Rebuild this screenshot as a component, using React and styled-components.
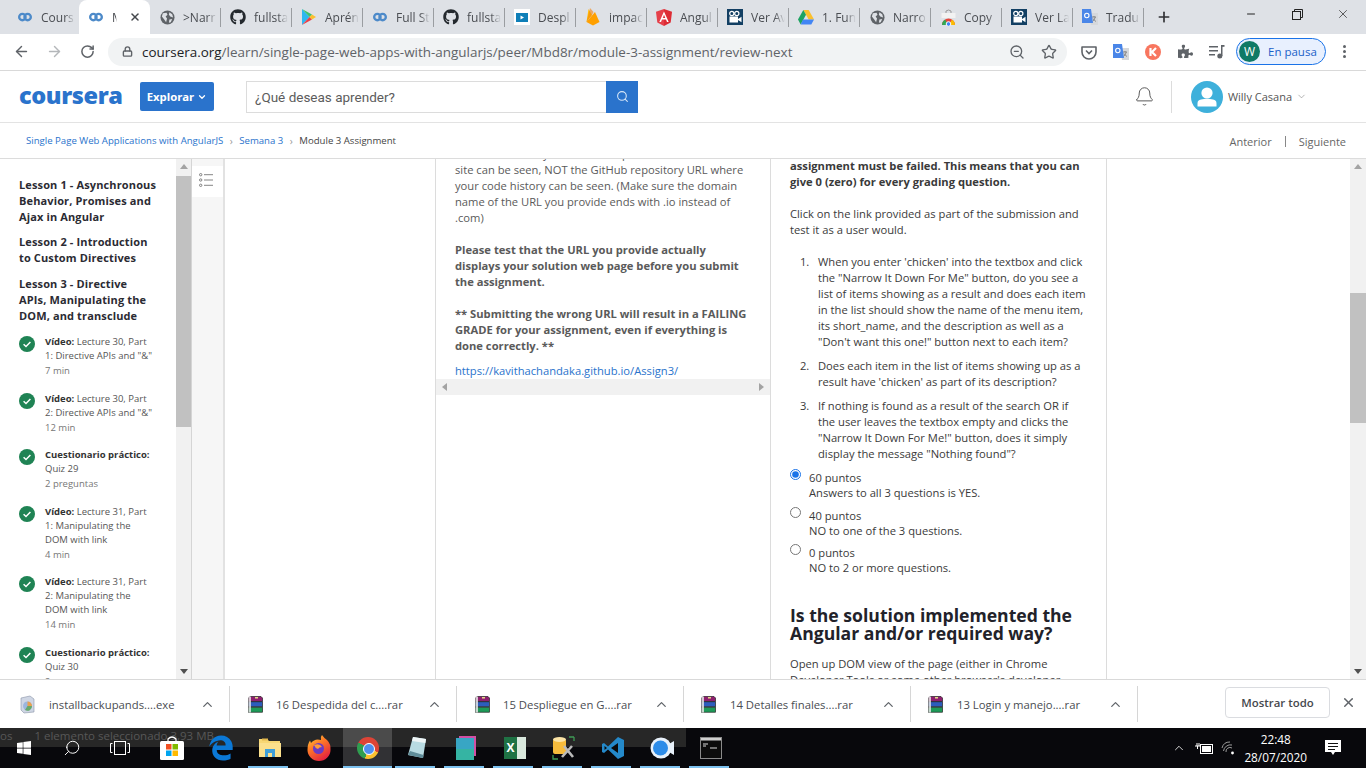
import React from "react";
import styled, { createGlobalStyle } from "styled-components";
import { FaGithub, FaPuzzlePiece, FaEdgeLegacy, FaWindows } from "react-icons/fa";
import {
  ArrowLeft,
  ArrowRight,
  RotateCw,
  Lock,
  Star,
  Search,
  ZoomOut,
  X,
  Plus,
  Minus,
  ChevronDown,
  ChevronUp,
  Bell,
} from "lucide-react";

const GlobalStyle = createGlobalStyle`
  html, body { margin: 0; padding: 0; height: 100%; overflow: hidden; }
  body { font-family: "Open Sans", "Liberation Sans", sans-serif; background: #fff; }
  * { box-sizing: border-box; }
`;

const Page = styled.div`
  width: 1366px;
  height: 768px;
  display: flex;
  flex-direction: column;
  overflow: hidden;
`;

/* ---------- icons ---------- */

const CourseraMark = ({ size = 14 }) => (
  <svg width={size} height={size} viewBox="0 0 24 24" fill="none" stroke="#4d8ac9" strokeWidth="4">
    <circle cx="7.5" cy="12" r="5.5" />
    <circle cx="16.5" cy="12" r="5.5" />
  </svg>
);

const GlobeIcon = () => (
  <svg width="15" height="15" viewBox="0 0 16 16">
    <circle cx="8" cy="8" r="7.5" fill="#5f6368" />
    <path d="M3 3.5 L7 3 L8 5 L6 7 L7.5 9 L6.5 13 L4.5 10 L2 7 Z M10 2.5 L13 4.5 L14 8 L11 7 L9.5 5 Z M10 10 L13 9.5 L11.5 13 L9.5 13.5 Z" fill="#dee1e6" />
  </svg>
);

const PlayIcon = () => (
  <svg width="14" height="16" viewBox="0 0 14 16">
    <polygon points="0,0 7.5,8 0,16" fill="#2fb8f0" />
    <polygon points="0,0 10,5.6 7.5,8" fill="#3ec26f" />
    <polygon points="0,16 10,10.4 7.5,8" fill="#e8404a" />
    <polygon points="10,5.6 14,8 10,10.4 7.5,8" fill="#fbc02d" />
  </svg>
);

const BoxPlayIcon = () => (
  <svg width="16" height="16" viewBox="0 0 16 16">
    <rect width="16" height="16" fill="#fff" />
    <rect x="2" y="4" width="12" height="9" fill="#0f7fb8" />
    <polygon points="6.5,6.5 10,8.5 6.5,10.5" fill="#fff" />
  </svg>
);

const FirebaseIcon = () => (
  <svg width="14" height="18" viewBox="0 0 14 18">
    <polygon points="0.5,14 2.5,1 6,7" fill="#ffc107" />
    <polygon points="0.5,14 9,4 13.5,14 7,17.5" fill="#ffa000" />
    <polygon points="0.5,14 6,7 7.5,4 4,0" fill="#f6820c" opacity="0.6" />
  </svg>
);

const AngularIcon = () => (
  <svg width="16" height="17" viewBox="0 0 16 17">
    <polygon points="8,0 16,2.8 14.7,13.4 8,17" fill="#dd2c35" />
    <polygon points="8,0 0,2.8 1.3,13.4 8,17" fill="#e5404a" />
    <path d="M8 2.5 L3.3 13 H5 L6 10.5 H10 L11 13 H12.7 Z M6.7 9 L8 5.8 L9.3 9 Z" fill="#fff" />
  </svg>
);

const CameraTile = () => (
  <svg width="16" height="16" viewBox="0 0 16 16">
    <rect width="16" height="16" fill="#123f63" />
    <circle cx="4.8" cy="4.5" r="2.1" fill="none" stroke="#fff" strokeWidth="1.2" />
    <circle cx="9.8" cy="4.5" r="2.1" fill="none" stroke="#fff" strokeWidth="1.2" />
    <rect x="2.5" y="7.5" width="8.5" height="6" fill="#fff" />
    <polygon points="11,10 14.5,7.8 14.5,13.2 11,11" fill="#fff" />
  </svg>
);

const DriveIcon = () => (
  <svg width="16" height="15" viewBox="0 0 16 15">
    <polygon points="5.3,0 10.7,0 16,9.5 10.7,9.5" fill="#fbc02d" />
    <polygon points="5.3,0 8,4.7 2.7,14.5 0,9.5" fill="#1ea362" />
    <polygon points="5,9.5 16,9.5 13.3,14.5 2.7,14.5" fill="#4285f4" />
  </svg>
);

const StoreBagIcon = () => (
  <svg width="15" height="17" viewBox="0 0 15 17">
    <path d="M5 4 V2 Q7.5 0 10 2 V4" fill="none" stroke="#9a9a9a" />
    <rect x="0.5" y="4" width="14" height="5" fill="#f2f2f2" />
    <path d="M1 16 A6.5 6.5 0 0 1 14 16 Z" fill="#e8453c" />
    <path d="M1 16 A6.5 6.5 0 0 1 4 10.6 L7.5 16 Z" fill="#34a853" />
    <path d="M14 16 A6.5 6.5 0 0 0 11 10.6 L7.5 16 Z" fill="#fbbc05" />
    <circle cx="7.5" cy="15" r="2.3" fill="#4285f4" stroke="#fff" />
  </svg>
);

const TranslateIcon = ({ size = 16 }) => (
  <svg width={size} height={size} viewBox="0 0 16 16">
    <polygon points="7,4 16,4 16,16 9,16" fill="#d6d8db" />
    <path d="M10 8 H14 M12 7 V8 M13.3 8 Q12.5 11 10.5 12.5 M11 9.5 Q12.2 11.5 14 12.5" stroke="#777" strokeWidth="0.8" fill="none" />
    <polygon points="0,0 9,0 11,14 0,14" fill="#4a86e8" />
    <circle cx="4.8" cy="6.5" r="2.2" fill="none" stroke="#fff" strokeWidth="1.1" />
  </svg>
);

const RestoreIcon = () => (
  <svg width="11" height="11" viewBox="0 0 11 11" fill="none" stroke="#222">
    <rect x="0.5" y="2.5" width="8" height="8" />
    <path d="M2.5 2.5 V0.5 H10.5 V8.5 H8.5" />
  </svg>
);

const PocketIcon = () => (
  <svg width="16" height="16" viewBox="0 0 16 16" fill="none">
    <path d="M1 3 H15 V8 A7 7 0 0 1 1 8 Z" stroke="#5f6368" strokeWidth="1.6" strokeLinejoin="round" />
    <path d="M5 6.5 L8 9.5 L11 6.5" stroke="#5f6368" strokeWidth="1.6" />
  </svg>
);

const KIcon = () => (
  <svg width="16" height="16" viewBox="0 0 16 16">
    <circle cx="8" cy="8" r="8" fill="#f8765f" />
    <path d="M5.5 4 V12 M11 4 L7 8 L11 12" stroke="#fff" strokeWidth="2.2" fill="none" />
  </svg>
);

const QueueMusicIcon = () => (
  <svg width="16" height="14" viewBox="0 0 16 14" fill="#5f6368">
    <rect y="1" width="9" height="1.5" />
    <rect y="5" width="9" height="1.5" />
    <rect y="9" width="6" height="1.5" />
    <rect x="12" y="0" width="1.5" height="11" />
    <rect x="12" y="0" width="3.5" height="1.8" />
    <circle cx="10.8" cy="11" r="2.5" />
  </svg>
);

const ListIcon = () => (
  <svg width="15" height="14" viewBox="0 0 15 14" fill="none" stroke="#666" strokeWidth="0.8">
    <circle cx="1.7" cy="1.7" r="1.2" />
    <circle cx="1.7" cy="7" r="1.2" />
    <circle cx="1.7" cy="12.3" r="1.2" />
    <path d="M5 1.7 H14 M5 7 H14 M5 12.3 H14" />
  </svg>
);

const CheckBadge = () => (
  <svg width="16" height="16" viewBox="0 0 16 16">
    <circle cx="8" cy="8" r="8" fill="#1f8354" />
    <path d="M4.6 8.2 L7 10.5 L11.4 6" fill="none" stroke="#fff" strokeWidth="1.5" />
  </svg>
);

const PersonAvatar = () => (
  <svg width="32" height="32" viewBox="0 0 32 32">
    <circle cx="16" cy="16" r="16" fill="#3eb0db" />
    <circle cx="16" cy="12" r="5.6" fill="#fff" />
    <path d="M6.5 25.5 V22.5 Q6.5 19 10 18.6 Q16 17 22 18.6 Q25.5 19 25.5 22.5 V25.5 Z" fill="#fff" />
  </svg>
);

const RarIcon = () => (
  <svg width="17" height="17" viewBox="0 0 17 17">
    <polygon points="3,0.5 14,0.5 15.5,2 15.5,5.5 1.5,5.5 1.5,2" fill="#8e1f6f" stroke="#222" strokeWidth="0.7" />
    <rect x="1.5" y="5.8" width="14" height="5" fill="#2c5dbd" stroke="#222" strokeWidth="0.7" />
    <rect x="1.5" y="11.2" width="14" height="5" fill="#1d9a58" stroke="#222" strokeWidth="0.7" />
    <rect x="1.5" y="0.5" width="2.5" height="16" fill="#e4e4e4" opacity="0.85" />
    <rect x="8" y="1" width="3" height="1.5" fill="#e8d98a" />
  </svg>
);

const InstallerIcon = () => (
  <svg width="17" height="19" viewBox="0 0 17 19">
    <path d="M2 3 L11 1 L15 4 L15 17 L5 18 L2 15 Z" fill="#cfd6e4" stroke="#8a93a8" strokeWidth="0.6" />
    <circle cx="8.5" cy="11" r="4.5" fill="#9cb6dd" />
    <path d="M8.5 11 L8.5 6.5 A4.5 4.5 0 0 1 13 11 Z" fill="#e9a04f" />
    <path d="M8.5 11 L13 11 A4.5 4.5 0 0 1 6 15 Z" fill="#67a86a" />
  </svg>
);

const StoreIcon = () => (
  <svg width="26" height="26" viewBox="0 0 26 26">
    <path d="M9 6 V4 Q13 0 17 4 V6" fill="none" stroke="#fff" strokeWidth="1.2" />
    <rect x="1" y="6" width="24" height="19" rx="1.5" fill="#fff" />
    <rect x="7" y="9" width="5.5" height="5.5" fill="#f25022" />
    <rect x="13.5" y="9" width="5.5" height="5.5" fill="#7fba00" />
    <rect x="7" y="15.5" width="5.5" height="5.5" fill="#00a4ef" />
    <rect x="13.5" y="15.5" width="5.5" height="5.5" fill="#ffb900" />
  </svg>
);

const FolderIcon = () => (
  <svg width="22" height="20" viewBox="0 0 22 20">
    <path d="M0 1 H8 L10 3 H21 V19 H0 Z" fill="#f7d774" />
    <rect x="0" y="5" width="22" height="14" fill="#fbe08c" />
    <rect x="6" y="11" width="10" height="8" fill="#3f9fd8" />
    <rect x="9" y="15" width="4" height="4" fill="#fbe08c" />
    <rect x="3" y="0.5" width="6" height="2" fill="#e3b94f" />
  </svg>
);

const FirefoxIcon = () => (
  <svg width="24" height="26" viewBox="0 0 24 26">
    <defs>
      <linearGradient id="ffx" x1="0" y1="0" x2="0.6" y2="1">
        <stop offset="0" stopColor="#ffd43d" />
        <stop offset="0.45" stopColor="#ff7b27" />
        <stop offset="1" stopColor="#e4243f" />
      </linearGradient>
    </defs>
    <path d="M15 0 Q17 3 20 5 Q24 9 23.5 15 A11.5 11 0 0 1 0.5 15 Q0.5 9 3 5.5 L4 8 Q8 3 14 5 Q13 2 15 0 Z" fill="url(#ffx)" />
    <circle cx="11.5" cy="13.5" r="5.5" fill="#6a3bc5" />
    <path d="M7 10 Q13 8 15 12 Q12 12 11 14 Q8 13 7 10 Z" fill="#ff9b38" />
  </svg>
);

const ChromeBall = styled.span`
  position: relative;
  display: block;
  width: 22px;
  height: 22px;
  border-radius: 50%;
  background: conic-gradient(#dd4437 0 115deg, #fbc02d 115deg 195deg, #2f9e50 195deg 300deg, #dd4437 300deg);
  &::after {
    content: "";
    position: absolute;
    left: 6px;
    top: 6px;
    width: 10px;
    height: 10px;
    border-radius: 50%;
    background: #4f8ff0;
    border: 1.5px solid #fff;
  }
`;

const NotepadIcon = () => (
  <svg width="20" height="24" viewBox="0 0 20 24">
    <polygon points="6,1 19,3 16,22 1,19" fill="#b8dbe2" />
    <polygon points="6,1 19,3 18.4,7 5,5" fill="#eef5f6" />
    <polygon points="1,19 16,22 16.5,19 3,15" fill="#5f8c99" />
  </svg>
);

const SquareAppIcon = () => (
  <svg width="20" height="24" viewBox="0 0 20 24">
    <rect x="3" y="0" width="17" height="20" fill="#d14fa4" />
    <rect x="0" y="2" width="18" height="22" fill="#38a6c4" />
    <rect x="0" y="13" width="18" height="11" fill="#35b4a3" />
  </svg>
);

const ExcelBox = styled.span`
  width: 22px;
  height: 22px;
  background: linear-gradient(to right, #1f7244 0 60%, #d9e8dd 60%);
  color: #fff;
  font-weight: 700;
  font-size: 12px;
  line-height: 22px;
  padding-left: 3px;
`;

const DbToolIcon = () => (
  <svg width="24" height="24" viewBox="0 0 24 24">
    <rect x="1" y="3" width="13" height="15" rx="2" fill="#f6bb3c" />
    <ellipse cx="7.5" cy="3.5" rx="6.5" ry="2.5" fill="#fbe3a5" />
    <path d="M17 1 H22 M22 1 V5 M1 19 V23 H6" stroke="#3f9a55" strokeWidth="1.3" fill="none" />
    <path d="M10 21 L20 10 M12 10 L21 21" stroke="#bbb" strokeWidth="2.6" />
  </svg>
);

const VsCodeIcon = () => (
  <svg width="24" height="24" viewBox="0 0 24 24">
    <path d="M17 1 L23 4 V20 L17 23 L7 13.5 L3 17 L1 16 V8 L3 7 L7 10.5 Z" fill="#2489ca" />
    <path d="M17 7 L10 12 L17 17 Z" fill="#0b0b0b" />
    <path d="M3.5 10 L6 12 L3.5 14 Z" fill="#0b0b0b" />
  </svg>
);

const ZoomAppIcon = () => (
  <svg width="24" height="22" viewBox="0 0 24 22">
    <circle cx="11" cy="11" r="10.5" fill="#e8f1fa" />
    <circle cx="10.5" cy="11" r="7.5" fill="#2d8ce8" />
    <path d="M19 7 L24 4 V18 L19 15 Z" fill="#e8f1fa" />
  </svg>
);

const ConsoleIcon = () => (
  <svg width="22" height="22" viewBox="0 0 22 22">
    <rect x="0.5" y="0.5" width="21" height="21" fill="#0c0c0c" stroke="#8a8a8a" />
    <rect x="1" y="1" width="20" height="2.5" fill="#cfcfcf" />
    <path d="M3 7 H8 M3 9 H6 M10 11 H17" stroke="#d8d8d8" strokeWidth="1.2" />
  </svg>
);

const BatteryIcon = () => (
  <svg width="18" height="14" viewBox="0 0 18 14" fill="none" stroke="#fff">
    <rect x="5.5" y="3.5" width="12" height="9" />
    <rect x="7" y="5" width="9" height="6" fill="#fff" stroke="none" />
    <path d="M0 5 H5 M2 2 V5 M4 2 V5 M2.5 5 V8" />
  </svg>
);

const WifiIcon = () => (
  <svg width="14" height="14" viewBox="0 0 14 14" fill="none" stroke="#9c9c9c">
    <path d="M1 7 A8 8 0 0 1 9 1 M2.5 10 A7 7 0 0 1 11 4 M5 11 A4 4 0 0 1 11 7" />
    <circle cx="11.5" cy="12" r="1.4" fill="#fff" stroke="none" />
  </svg>
);

const NoteIcon = () => (
  <svg width="16" height="16" viewBox="0 0 16 16">
    <path d="M0 0 H16 V12 H10 L8 15 L6 12 H0 Z" fill="#fff" />
    <path d="M3 3.5 H13 M3 6.5 H13 M3 9.5 H10" stroke="#111" />
  </svg>
);

const TaskViewIcon = () => (
  <svg width="20" height="16" viewBox="0 0 20 16" fill="none" stroke="#fff">
    <rect x="4.5" y="1.5" width="11" height="13" />
    <path d="M2.5 3.5 H0.5 V12.5 H2.5 M17.5 3.5 H19.5 V12.5 H17.5" />
  </svg>
);

/* ---------- tab strip ---------- */

const TabStrip = styled.div`
  height: 34px;
  flex: none;
  background: #dee1e6;
  display: flex;
  align-items: stretch;
  padding-left: 8px;
`;

const Tab = styled.div`
  position: relative;
  width: 71px;
  flex: none;
  display: flex;
  align-items: center;
  gap: 8px;
  padding-left: 9px;
  background: ${(p) => (p.$active ? "#fff" : "transparent")};
  border-radius: ${(p) => (p.$active ? "8px 8px 0 0" : "0")};
  &::after {
    content: "";
    display: ${(p) => (p.$divider ? "block" : "none")};
    position: absolute;
    right: 0;
    top: 8px;
    height: 19px;
    width: 1px;
    background: #9a9da1;
  }
`;

const TabIcon = styled.span`
  width: 16px;
  height: 18px;
  flex: none;
  display: flex;
  align-items: center;
  justify-content: center;
  color: #24292e;
`;

const TabLabel = styled.span`
  font-size: 12px;
  color: #4a4d52;
  white-space: nowrap;
  overflow: hidden;
  flex: 1;
  margin-right: 4px;
  -webkit-mask-image: linear-gradient(to right, #000 70%, transparent);
  mask-image: linear-gradient(to right, #000 70%, transparent);
`;

const TabClose = styled(X)`
  flex: none;
  margin-right: 9px;
  color: #45484d;
`;

const NewTab = styled.span`
  width: 30px;
  margin-left: 5px;
  display: flex;
  align-items: center;
  justify-content: center;
  color: #303134;
`;

const WindowControls = styled.div`
  margin-left: auto;
  display: flex;
  align-items: flex-start;
  padding-top: 6px;
`;

const WindowButton = styled.span`
  width: 46px;
  height: 16px;
  display: flex;
  align-items: center;
  justify-content: center;
  color: #222;
`;

/* ---------- toolbar ---------- */

const Toolbar = styled.div`
  height: 37px;
  flex: none;
  background: #fff;
  border-bottom: 1px solid #d9d9d9;
  display: flex;
  align-items: center;
  padding: 0 10px 1px 5px;
`;

const NavButton = styled.span`
  width: 32px;
  display: flex;
  justify-content: center;
  margin-right: 1px;
  color: ${(p) => (p.$off ? "#b4b7ba" : "#5f6368")};
`;

const AddressBar = styled.div`
  margin-left: 4px;
  width: 959px;
  height: 28px;
  border-radius: 14px;
  background: #f1f3f4;
  display: flex;
  align-items: center;
  padding-left: 14px;
  color: #5f6368;
`;

const UrlText = styled.span`
  margin-left: 9px;
  font-family: "Open Sans", sans-serif;
  font-size: 13.44px;
  color: #5f6368;
  white-space: nowrap;
  b {
    font-weight: 400;
    color: #202124;
  }
`;

const AddressIcons = styled.div`
  margin-left: auto;
  display: flex;
  gap: 16px;
  padding-right: 10px;
`;

const ExtensionRow = styled.div`
  display: flex;
  align-items: center;
  margin-left: 6px;
`;

const Extension = styled.span`
  width: 32px;
  display: flex;
  justify-content: center;
  color: #5f6368;
`;

const ProfilePill = styled.div`
  margin-left: 3px;
  width: 90px;
  height: 27px;
  border: 1.5px solid #1a73e8;
  border-radius: 14px;
  background: #e8f0fe;
  display: flex;
  align-items: center;
  padding-left: 2px;
  gap: 8px;
  font-size: 11.5px;
  color: #1a5fc8;
`;

const ProfileBadge = styled.span`
  width: 21px;
  height: 21px;
  border-radius: 50%;
  background: #0f7a66;
  color: #fff;
  font-size: 12px;
  display: flex;
  align-items: center;
  justify-content: center;
`;

const KebabDots = styled.span`
  margin-left: 17px;
  display: flex;
  flex-direction: column;
  gap: 2px;
  i {
    width: 3px;
    height: 3px;
    border-radius: 50%;
    background: #5f6368;
  }
`;

/* ---------- coursera header ---------- */

const SiteHeader = styled.header`
  height: 52px;
  flex: none;
  background: #fff;
  border-bottom: 1px solid #e3e3e3;
  display: flex;
  align-items: center;
  padding-left: 19px;
`;

const Logo = styled.span`
  width: 102px;
  margin-bottom: 3px;
  font-family: "Open Sans", sans-serif;
  font-weight: 800;
  font-size: 23.5px;
  line-height: 22px;
  letter-spacing: -0.4px;
  color: #2a73cc;
`;

const ExploreButton = styled.button`
  margin-left: 19px;
  width: 74px;
  height: 29px;
  border: 0;
  border-radius: 2px;
  background: #2a73cc;
  color: #fff;
  font-family: "Open Sans", sans-serif;
  font-weight: 700;
  font-size: 11.3px;
  display: flex;
  align-items: center;
  justify-content: center;
  gap: 3px;
  padding: 0;
`;

const SearchBox = styled.div`
  margin-left: 32px;
  display: flex;
  height: 32px;
  width: 392px;
`;

const SearchInput = styled.div`
  flex: 1;
  border: 1px solid #dcdcdc;
  border-right: 0;
  font-size: 13.5px;
  line-height: 30px;
  padding-left: 8px;
  color: #5c5c5c;
  font-family: "Roboto", sans-serif;
`;

const SearchButton = styled.span`
  width: 32px;
  background: #2a73cc;
  color: #d7e6f7;
  display: flex;
  align-items: center;
  justify-content: center;
`;

const UserArea = styled.div`
  margin-left: auto;
  display: flex;
  align-items: center;
  padding-right: 59px;
`;

const HeaderDivider = styled.span`
  width: 1px;
  height: 32px;
  background: #dcdcdc;
  margin: 0 19px 0 16px;
`;

const UserName = styled.span`
  margin-left: 5px;
  margin-right: 4px;
  font-size: 11px;
  color: #555;
`;

/* ---------- breadcrumb ---------- */

const BreadcrumbBar = styled.nav`
  height: 36px;
  flex: none;
  background: #fff;
  border-bottom: 1px solid #dcdcdc;
  display: flex;
  align-items: center;
  padding: 0 20px 0 26px;
  font-size: 9.6px;
`;

const Crumb = styled.span`
  color: ${(p) => (p.$current ? "#444" : "#2a73cc")};
`;

const CrumbSep = styled.span`
  color: #999;
  font-size: 10px;
  margin: 0 6.5px;
`;

const Pager = styled.div`
  margin-left: auto;
  margin-top: 2px;
  display: flex;
  align-items: center;
  font-size: 11px;
  color: #666;
`;

const PagerSep = styled.span`
  width: 1px;
  height: 11px;
  background: #888;
  margin: 0 13px;
`;

/* ---------- main ---------- */

const Main = styled.main`
  flex: 1;
  min-height: 0;
  display: flex;
  background: #fff;
  overflow: hidden;
`;

const SideNav = styled.aside`
  width: 176px;
  flex: none;
  overflow: hidden;
  padding: 18px 0 0 19px;
`;

const LessonTitle = styled.h3`
  margin: 0 0 ${(p) => p.$gap}px;
  font-size: 11px;
  line-height: 16px;
  letter-spacing: 0.13px;
  font-weight: 700;
  color: #2b2b33;
  white-space: nowrap;
`;

const LessonItem = styled.div`
  display: flex;
  gap: 10px;
  margin-bottom: 13.5px;
`;

const ItemBadge = styled.span`
  flex: none;
`;

const ItemText = styled.div`
  font-size: 9.5px;
  line-height: 14px;
  color: #555;
  white-space: nowrap;
  b {
    font-weight: 700;
    color: #333;
  }
`;

const ItemMeta = styled.div`
  margin-top: 1px;
  color: #777;
`;

const Scrollbar = styled.div`
  width: ${(p) => p.$width}px;
  flex: none;
  background: #f1f1f1;
  display: flex;
  flex-direction: column;
  align-items: stretch;
  position: relative;
  border-right: ${(p) => (p.$edge ? "1px solid #d5d5d5" : "0")};
`;

const ScrollThumb = styled.div`
  margin-top: ${(p) => p.$top}px;
  height: ${(p) => p.$height}px;
  background: #c1c1c1;
  flex: none;
`;

const ArrowUp = styled.span`
  position: absolute;
  top: 5px;
  left: 50%;
  margin-left: -4px;
  border: 4px solid transparent;
  border-top: 0;
  border-bottom: 5px solid #a3a3a3;
`;

const ArrowDown = styled.span`
  position: absolute;
  bottom: 5px;
  left: 50%;
  margin-left: -4px;
  border: 4px solid transparent;
  border-bottom: 0;
  border-top: 5px solid #505050;
`;

const IconRail = styled.div`
  width: 33px;
  flex: none;
  background: #f6f6f6;
  border-right: 2px solid #e2e2e2;
  padding-top: 7px;
`;

const RailButton = styled.div`
  height: 31px;
  background: #fff;
  padding: 7px 0 0 7px;
  svg {
    display: block;
  }
`;

const Gutter = styled.div`
  width: 210px;
  flex: none;
`;

const Panel = styled.section`
  width: ${(p) => p.$width}px;
  flex: none;
  border-left: 1px solid #dcdcdc;
  border-right: ${(p) => (p.$closed ? "1px solid #dcdcdc" : "0")};
  overflow: hidden;
  display: flex;
  flex-direction: column;
  align-items: stretch;
`;

const PanelBody = styled.div`
  height: ${(p) => (p.$height ? `${p.$height}px` : "auto")};
  overflow: ${(p) => (p.$height ? "hidden" : "visible")};
  padding-left: 19px;
  flex: none;
`;

const Prose = styled.div`
  margin-top: ${(p) => p.$top || 0}px;
  font-size: 11.2px;
  line-height: 16px;
  color: ${(p) => (p.$muted ? "#5a5a5a" : "#3a3a3a")};
  white-space: nowrap;
  b {
    font-weight: 700;
  }
`;

const SubmissionLink = styled.a`
  display: block;
  margin-top: 9px;
  font-size: 11.2px;
  line-height: 16px;
  color: #2a73cc;
`;

const HScroll = styled.div`
  height: 16px;
  flex: none;
  background: #f1f1f1;
  display: flex;
  align-items: center;
  justify-content: space-between;
  padding: 0 6px;
`;

const ArrowLeftTri = styled.span`
  border: 4px solid transparent;
  border-left: 0;
  border-right: 5px solid #a3a3a3;
`;

const ArrowRightTri = styled.span`
  border: 4px solid transparent;
  border-right: 0;
  border-left: 5px solid #a3a3a3;
`;

const Questions = styled.ol`
  margin: 16px 0 0;
  padding: 0 0 0 28px;
  font-size: 11.2px;
  line-height: 16px;
  color: #3a3a3a;
  white-space: nowrap;
  li {
    margin-bottom: 8px;
  }
  li:last-child {
    margin-bottom: 0;
  }
  li::marker {
    content: counter(list-item) ".   ";
  }
`;

const RadioRow = styled.label`
  display: flex;
  align-items: flex-start;
  gap: 8px;
  margin-top: ${(p) => p.$top}px;
  font-size: 11.2px;
  line-height: 15px;
  color: #3a3a3a;
`;

const RadioInput = styled.input`
  width: 11px;
  height: 11px;
  margin: 0;
  flex: none;
  accent-color: #1a73e8;
`;

const RadioText = styled.div`
  padding-top: 1px;
`;

const SectionTitle = styled.h2`
  margin: 31px 0 0;
  font-size: 17.6px;
  line-height: 18px;
  font-weight: 700;
  color: #22222a;
  white-space: nowrap;
`;

const Rest = styled.div`
  flex: 1;
`;

/* ---------- download bar ---------- */

const DownloadBar = styled.div`
  height: 49px;
  flex: none;
  background: #fff;
  border-top: 1px solid #d9d9d9;
  display: flex;
  align-items: center;
`;

const Download = styled.div`
  width: ${(p) => p.$width}px;
  height: 36px;
  flex: none;
  border-right: 1px solid #d6d6d6;
  display: flex;
  align-items: center;
  padding-left: ${(p) => p.$pad}px;
  padding-right: 14px;
  font-size: 11.3px;
  color: #4a4d52;
`;

const DownloadName = styled.span`
  margin-left: ${(p) => p.$gap}px;
  white-space: nowrap;
  flex: 1;
`;

const ShowAll = styled.button`
  margin: 0 0 3px 87px;
  width: 105px;
  height: 31px;
  background: #fff;
  border: 1px solid #dadce0;
  border-radius: 4px;
  font-family: "Open Sans", sans-serif;
  font-size: 11.4px;
  font-weight: 600;
  color: #45484d;
  padding: 0;
`;

const CloseBar = styled.span`
  margin: 0 0 3px 11px;
  display: flex;
  color: #5f6368;
`;

/* ---------- taskbar ---------- */

const Taskbar = styled.footer`
  position: relative;
  height: 40px;
  flex: none;
  background: #08080c;
  display: flex;
  align-items: stretch;
  color: #fff;
`;

const GhostStatus = styled.div`
  position: absolute;
  left: 0;
  top: 0;
  width: 686px;
  height: 19px;
  background: #272727;
  color: #575757;
  font-size: 11.5px;
  line-height: 15px;
  white-space: nowrap;
  span {
    margin-left: 22px;
  }
`;

const TaskSlot = styled.div`
  position: relative;
  width: ${(p) => p.$w || 49}px;
  margin-left: ${(p) => p.$ml || 0}px;
  flex: none;
  display: flex;
  align-items: center;
  justify-content: center;
  background: ${(p) => (p.$active ? "rgba(255,255,255,0.17)" : "transparent")};
  &::after {
    content: "";
    display: ${(p) => (p.$open ? "block" : "none")};
    position: absolute;
    left: ${(p) => (p.$active ? 0 : 3)}px;
    right: ${(p) => (p.$active ? 0 : 6)}px;
    bottom: 0;
    height: 2px;
    background: #7cc1ef;
  }
`;

const SearchGlass = styled(Search)`
  transform: scaleX(-1);
`;

const Tray = styled.div`
  position: relative;
  margin-left: auto;
  display: flex;
  align-items: center;
  padding-right: 25px;
`;

const TrayItem = styled.span`
  display: flex;
  margin-right: ${(p) => p.$gap}px;
`;

const Clock = styled.div`
  text-align: center;
  font-size: 11.8px;
  line-height: 18px;
  margin-right: 18px;
  color: #fff;
`;

/* ---------- data ---------- */

const tabs = [
  { icon: <CourseraMark />, label: "Cours" },
  { icon: <CourseraMark />, label: "M", active: true },
  { icon: <GlobeIcon />, label: ">Narr" },
  { icon: <FaGithub size={16} />, label: "fullsta" },
  { icon: <PlayIcon />, label: "Aprén" },
  { icon: <CourseraMark />, label: "Full St" },
  { icon: <FaGithub size={16} />, label: "fullsta" },
  { icon: <BoxPlayIcon />, label: "Despl" },
  { icon: <FirebaseIcon />, label: "impac" },
  { icon: <AngularIcon />, label: "Angul" },
  { icon: <CameraTile />, label: "Ver Av" },
  { icon: <DriveIcon />, label: "1. Fun" },
  { icon: <GlobeIcon />, label: "Narro" },
  { icon: <StoreBagIcon />, label: "Copy" },
  { icon: <CameraTile />, label: "Ver La" },
  { icon: <TranslateIcon />, label: "Tradu" },
];

const lessonItems = [
  { kind: "Vídeo:", lines: ["Lecture 30, Part", '1: Directive APIs and "&"'], meta: "7 min" },
  { kind: "Vídeo:", lines: ["Lecture 30, Part", '2: Directive APIs and "&"'], meta: "12 min" },
  { kind: "Cuestionario práctico:", lines: ["", "Quiz 29"], meta: "2 preguntas" },
  { kind: "Vídeo:", lines: ["Lecture 31, Part", "1: Manipulating the", "DOM with link"], meta: "4 min" },
  { kind: "Vídeo:", lines: ["Lecture 31, Part", "2: Manipulating the", "DOM with link"], meta: "14 min" },
  { kind: "Cuestionario práctico:", lines: ["", "Quiz 30"], meta: "2 preguntas" },
];

const downloads = [
  { icon: <InstallerIcon />, name: "installbackupands....exe", width: 230, pad: 19, gap: 13 },
  { icon: <RarIcon />, name: "16 Despedida del c....rar", width: 227, pad: 17, gap: 12 },
  { icon: <RarIcon />, name: "15 Despliegue en G....rar", width: 227, pad: 17, gap: 12 },
  { icon: <RarIcon />, name: "14 Detalles finales....rar", width: 227, pad: 16, gap: 13 },
  { icon: <RarIcon />, name: "13 Login y manejo....rar", width: 227, pad: 16, gap: 13 },
];

const taskApps = [
  { icon: <StoreIcon />, ml: 3 },
  { icon: <FaEdgeLegacy size={26} color="#0b78d6" /> },
  { icon: <FolderIcon />, open: true },
  { icon: <FirefoxIcon /> },
  { icon: <ChromeBall />, open: true, active: true },
  { icon: <NotepadIcon />, open: true },
  { icon: <SquareAppIcon />, open: true },
  { icon: <ExcelBox>X</ExcelBox>, open: true },
  { icon: <DbToolIcon />, open: true },
  { icon: <VsCodeIcon />, open: true },
  { icon: <ZoomAppIcon />, open: true },
  { icon: <ConsoleIcon />, open: true },
];

const App = () => {
  return (
    <Page>
      <GlobalStyle />

      <TabStrip>
        {tabs.map((tab, i) => (
          <Tab key={i} $active={tab.active} $divider={i > 1}>
            <TabIcon>{tab.icon}</TabIcon>
            <TabLabel>{tab.label}</TabLabel>
            {tab.active && <TabClose size={12} strokeWidth={3} />}
          </Tab>
        ))}
        <NewTab>
          <Plus size={16} strokeWidth={2.5} />
        </NewTab>
        <WindowControls>
          <WindowButton>
            <Minus size={12} />
          </WindowButton>
          <WindowButton>
            <RestoreIcon />
          </WindowButton>
          <WindowButton>
            <X size={14} strokeWidth={1.2} />
          </WindowButton>
        </WindowControls>
      </TabStrip>

      <Toolbar>
        <NavButton>
          <ArrowLeft size={17} />
        </NavButton>
        <NavButton $off>
          <ArrowRight size={17} />
        </NavButton>
        <NavButton>
          <RotateCw size={15} strokeWidth={2.4} />
        </NavButton>
        <AddressBar>
          <Lock size={11} strokeWidth={3} />
          <UrlText>
            <b>coursera.org</b>/learn/single-page-web-apps-with-angularjs/peer/Mbd8r/module-3-assignment/review-next
          </UrlText>
          <AddressIcons>
            <ZoomOut size={16} />
            <Star size={16} />
          </AddressIcons>
        </AddressBar>
        <ExtensionRow>
          <Extension>
            <PocketIcon />
          </Extension>
          <Extension>
            <TranslateIcon />
          </Extension>
          <Extension>
            <KIcon />
          </Extension>
          <Extension>
            <FaPuzzlePiece size={15} />
          </Extension>
          <Extension>
            <QueueMusicIcon />
          </Extension>
        </ExtensionRow>
        <ProfilePill>
          <ProfileBadge>W</ProfileBadge>
          En pausa
        </ProfilePill>
        <KebabDots>
          <i />
          <i />
          <i />
        </KebabDots>
      </Toolbar>

      <SiteHeader>
        <Logo>coursera</Logo>
        <ExploreButton>
          Explorar
          <ChevronDown size={10} strokeWidth={3} />
        </ExploreButton>
        <SearchBox>
          <SearchInput>¿Qué deseas aprender?</SearchInput>
          <SearchButton>
            <Search size={13} />
          </SearchButton>
        </SearchBox>
        <UserArea>
          <Bell size={21} strokeWidth={1} color="#444" />
          <HeaderDivider />
          <PersonAvatar />
          <UserName>Willy Casana</UserName>
          <ChevronDown size={11} strokeWidth={1.2} color="#777" />
        </UserArea>
      </SiteHeader>

      <BreadcrumbBar>
        <Crumb>Single Page Web Applications with AngularJS</Crumb>
        <CrumbSep>›</CrumbSep>
        <Crumb>Semana 3</Crumb>
        <CrumbSep>›</CrumbSep>
        <Crumb $current>Module 3 Assignment</Crumb>
        <Pager>
          Anterior
          <PagerSep />
          Siguiente
        </Pager>
      </BreadcrumbBar>

      <Main>
        <SideNav>
          <LessonTitle $gap={9}>
            Lesson 1 - Asynchronous
            <br />
            Behavior, Promises and
            <br />
            Ajax in Angular
          </LessonTitle>
          <LessonTitle $gap={10}>
            Lesson 2 - Introduction
            <br />
            to Custom Directives
          </LessonTitle>
          <LessonTitle $gap={11}>
            Lesson 3 - Directive
            <br />
            APIs, Manipulating the
            <br />
            DOM, and transclude
          </LessonTitle>
          {lessonItems.map((item, i) => (
            <LessonItem key={i}>
              <ItemBadge>
                <CheckBadge />
              </ItemBadge>
              <ItemText>
                <b>{item.kind}</b> {item.lines[0]}
                {item.lines.slice(1).map((line) => (
                  <div key={line}>{line}</div>
                ))}
                <ItemMeta>{item.meta}</ItemMeta>
              </ItemText>
            </LessonItem>
          ))}
        </SideNav>

        <Scrollbar $width={16} $edge>
          <ArrowUp />
          <ScrollThumb $top={17} $height={251} />
          <ArrowDown />
        </Scrollbar>
        <IconRail>
          <RailButton>
            <ListIcon />
          </RailButton>
        </IconRail>
        <Gutter />

        <Panel $width={335}>
          <PanelBody $height={220}>
            <Prose $muted $top={-13}>
              Enter the URL of your GitHub.io published web
              <br />
              site can be seen, NOT the GitHub repository URL where
              <br />
              your code history can be seen. (Make sure the domain
              <br />
              name of the URL you provide ends with .io instead of
              <br />
              .com)
              <br />
              <br />
              <b>
                Please test that the URL you provide actually
                <br />
                displays your solution web page before you submit
                <br />
                the assignment.
                <br />
                <br />
                ** Submitting the wrong URL will result in a FAILING
                <br />
                GRADE for your assignment, even if everything is
                <br />
                done correctly. **
              </b>
            </Prose>
            <SubmissionLink>https://kavithachandaka.github.io/Assign3/</SubmissionLink>
          </PanelBody>
          <HScroll>
            <ArrowLeftTri />
            <ArrowRightTri />
          </HScroll>
        </Panel>

        <Panel $width={337} $closed>
          <PanelBody>
            <Prose $top={-1}>
              <b>
                assignment must be failed. This means that you can
                <br />
                give 0 (zero) for every grading question.
              </b>
              <br />
              <br />
              Click on the link provided as part of the submission and
              <br />
              test it as a user would.
            </Prose>
            <Questions>
              <li>
                When you enter 'chicken' into the textbox and click
                <br />
                the "Narrow It Down For Me" button, do you see a
                <br />
                list of items showing as a result and does each item
                <br />
                in the list should show the name of the menu item,
                <br />
                its short_name, and the description as well as a
                <br />
                "Don't want this one!" button next to each item?
              </li>
              <li>
                Does each item in the list of items showing up as a
                <br />
                result have 'chicken' as part of its description?
              </li>
              <li>
                If nothing is found as a result of the search OR if
                <br />
                the user leaves the textbox empty and clicks the
                <br />
                "Narrow It Down For Me!" button, does it simply
                <br />
                display the message "Nothing found"?
              </li>
            </Questions>
            <RadioRow $top={7}>
              <RadioInput type="radio" name="grade" defaultChecked />
              <RadioText>
                60 puntos
                <br />
                Answers to all 3 questions is YES.
              </RadioText>
            </RadioRow>
            <RadioRow $top={7}>
              <RadioInput type="radio" name="grade" />
              <RadioText>
                40 puntos
                <br />
                NO to one of the 3 questions.
              </RadioText>
            </RadioRow>
            <RadioRow $top={6}>
              <RadioInput type="radio" name="grade" />
              <RadioText>
                0 puntos
                <br />
                NO to 2 or more questions.
              </RadioText>
            </RadioRow>
            <SectionTitle>
              Is the solution implemented the
              <br />
              Angular and/or required way?
            </SectionTitle>
            <Prose $top={14}>
              Open up DOM view of the page (either in Chrome
              <br />
              Developer Tools or some other browser's developer
            </Prose>
          </PanelBody>
        </Panel>

        <Rest />

        <Scrollbar $width={16}>
          <ArrowUp />
          <ScrollThumb $top={134} $height={130} />
          <ArrowDown />
        </Scrollbar>
      </Main>

      <DownloadBar>
        {downloads.map((d) => (
          <Download key={d.name} $width={d.width} $pad={d.pad}>
            {d.icon}
            <DownloadName $gap={d.gap}>{d.name}</DownloadName>
            <ChevronUp size={15} strokeWidth={2} color="#5f6368" />
          </Download>
        ))}
        <ShowAll>Mostrar todo</ShowAll>
        <CloseBar>
          <X size={15} strokeWidth={2.4} />
        </CloseBar>
      </DownloadBar>

      <Taskbar>
        <GhostStatus>
          os<span>1 elemento seleccionado 3,93 MB</span>
        </GhostStatus>
        <TaskSlot $w={48}>
          <FaWindows size={16} />
        </TaskSlot>
        <TaskSlot $w={48}>
          <SearchGlass size={18} strokeWidth={1.3} />
        </TaskSlot>
        <TaskSlot $w={48}>
          <TaskViewIcon />
        </TaskSlot>
        {taskApps.map((app, i) => (
          <TaskSlot key={i} $ml={app.ml} $open={app.open} $active={app.active}>
            {app.icon}
          </TaskSlot>
        ))}
        <Tray>
          <TrayItem $gap={9}>
            <ChevronUp size={14} strokeWidth={1.4} color="#fff" />
          </TrayItem>
          <TrayItem $gap={8}>
            <BatteryIcon />
          </TrayItem>
          <TrayItem $gap={9}>
            <WifiIcon />
          </TrayItem>
          <Clock>
            22:48
            <br />
            28/07/2020
          </Clock>
          <NoteIcon />
        </Tray>
      </Taskbar>
    </Page>
  );
};

export default App;
